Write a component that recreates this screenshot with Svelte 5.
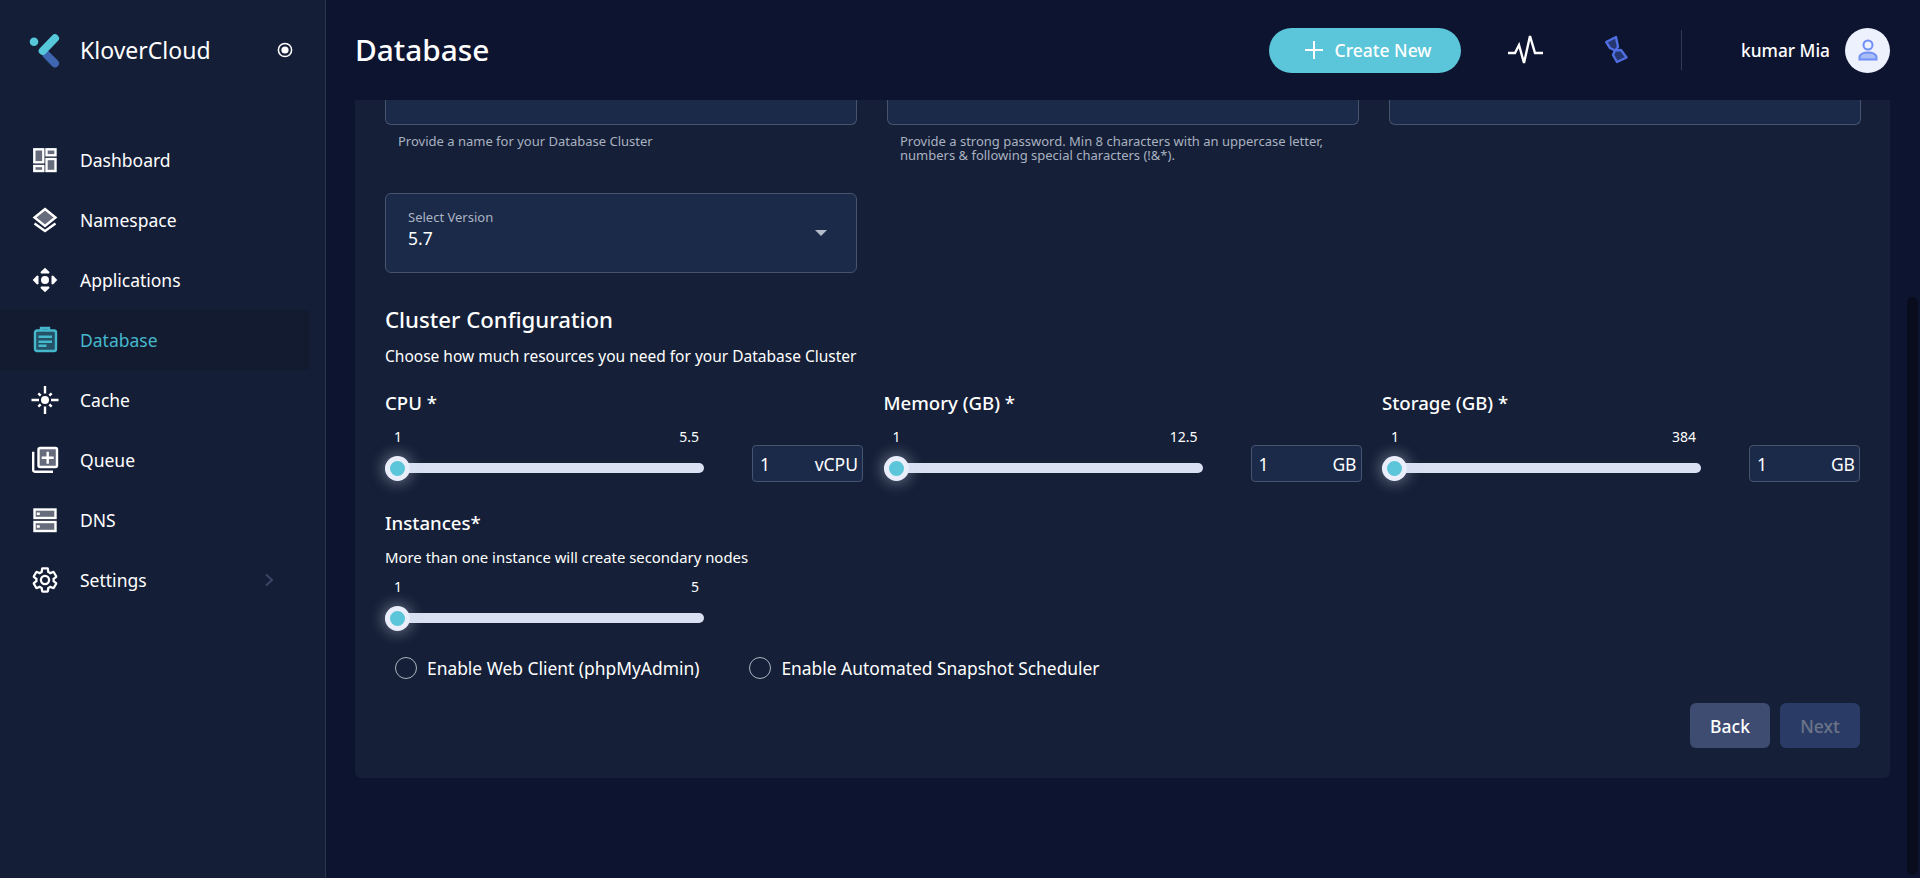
<script>
  const navItems = [
    { label: 'Dashboard', icon: 'dashboard' },
    { label: 'Namespace', icon: 'layers' },
    { label: 'Applications', icon: 'apps' },
    { label: 'Database', icon: 'database', active: true },
    { label: 'Cache', icon: 'cache' },
    { label: 'Queue', icon: 'queue' },
    { label: 'DNS', icon: 'dns' },
    { label: 'Settings', icon: 'settings', arrow: true }
  ];

  const resources = [
    { label: 'CPU *', max: '5.5', unit: 'vCPU' },
    { label: 'Memory (GB) *', max: '12.5', unit: 'GB' },
    { label: 'Storage (GB) *', max: '384', unit: 'GB' }
  ];
</script>

{#snippet navIcon(name)}
  <svg class="nav-icon" viewBox="0 0 28 28" width="28" height="28" fill="none" stroke="currentColor" stroke-width="2.4">
    {#if name === 'dashboard'}
      <g fill="currentColor" fill-opacity="0.35">
        <rect x="3.3" y="3.3" width="9" height="13" /><rect x="15.5" y="3.3" width="9" height="6" />
        <rect x="3.3" y="20" width="9" height="5" /><rect x="15.5" y="13" width="9" height="12" />
      </g>
    {:else if name === 'layers'}
      <path d="M14 3 24.5 11.5 14 20 3.5 11.5Z" fill="currentColor" fill-opacity="0.35" />
      <path d="M3.5 17.5 14 25l10.5-7.5" />
    {:else if name === 'apps'}
      <circle cx="14" cy="14" r="4" fill="currentColor" stroke="none" />
      <g fill="currentColor" stroke="none">
        <path d="M14 1.7 18.5 6 18 7.5H10L9.5 6Z" />
        <path d="M14 26.3 18.5 22 18 20.5H10L9.5 22Z" />
        <path d="M1.7 14 6 9.5 7.5 10V18L6 18.5Z" />
        <path d="M26.3 14 22 9.5 20.5 10V18L22 18.5Z" />
      </g>
    {:else if name === 'database'}
      <rect x="4" y="4.5" width="21" height="20.5" rx="2" fill="currentColor" fill-opacity="0.35" />
      <path d="M10 4.5V2h8v2.5" />
      <path d="M7.5 10.7H21M7.5 15.7H21M7.5 19.7h8" />
    {:else if name === 'cache'}
      <circle cx="14" cy="14" r="4" fill="currentColor" stroke="none" />
      <path d="M14 0v7.5M14 20.5V28M0.5 14H8M20 14h7.5M7.3 7.3l2.4 2.4M18.3 18.3l2.4 2.4M7.3 20.7l2.4-2.4M18.3 9.7l2.4-2.4" />
    {:else if name === 'queue'}
      <path d="M2.2 5.7v18.5a1.5 1.5 0 0 0 1.5 1.5H22" />
      <rect x="7.5" y="2" width="18.5" height="19" rx="1.5" fill="currentColor" fill-opacity="0.35" />
      <path d="M16.7 5.7v12M10.7 11.7h12" />
    {:else if name === 'dns'}
      <g fill="currentColor" fill-opacity="0.35">
        <rect x="3.5" y="3.5" width="21" height="8.5" /><rect x="3.5" y="16" width="21" height="9" />
      </g>
      <path d="M5.8 7.7h3M5.8 20.5h3" />
    {:else if name === 'settings'}
      <g transform="translate(14 14) scale(1.2) translate(-12 -12)" stroke-width="1.9">
        <path d="M19.14 12.94c.04-.3.06-.61.06-.94 0-.32-.02-.64-.07-.94l2.03-1.58c.18-.14.23-.41.12-.61l-1.92-3.32c-.12-.22-.37-.29-.59-.22l-2.39.96c-.5-.38-1.03-.7-1.62-.94l-.36-2.54c-.04-.24-.24-.41-.48-.41h-3.84c-.24 0-.43.17-.47.41l-.36 2.54c-.59.24-1.13.57-1.62.94l-2.39-.96c-.22-.08-.47 0-.59.22L2.74 8.87c-.12.21-.08.47.12.61l2.03 1.58c-.05.3-.09.63-.09.94s.02.64.07.94l-2.03 1.58c-.18.14-.23.41-.12.61l1.92 3.32c.12.22.37.29.59.22l2.39-.96c.5.38 1.03.7 1.62.94l.36 2.54c.05.24.24.41.48.41h3.84c.24 0 .44-.17.47-.41l.36-2.54c.59-.24 1.13-.56 1.62-.94l2.39.96c.22.08.47 0 .59-.22l1.92-3.32c.12-.22.07-.47-.12-.61l-2.01-1.58z" />
        <circle cx="12" cy="12" r="3.4" />
      </g>
    {/if}
  </svg>
{/snippet}

{#snippet slider(max)}
  <div class="slider">
    <div class="range"><span>1</span><span>{max}</span></div>
    <div class="track"><div class="thumb"></div></div>
  </div>
{/snippet}

<div class="layout">
  <aside class="sidebar">
    <div class="brand">
      <svg class="logo" viewBox="0 0 36 36" width="36" height="36">
        <circle cx="5" cy="9.7" r="4.3" fill="#56c8da" />
        <path d="M17.7 23 26 31.3" stroke="#3f67b1" stroke-width="8" stroke-linecap="round" />
        <path d="M13.7 19 26 6.3" stroke="#56c8da" stroke-width="8" stroke-linecap="round" />
      </svg>
      <span class="brand-name">KloverCloud</span>
      <svg class="radio-icon" viewBox="0 0 16 16" width="16" height="16">
        <circle cx="8" cy="8" r="6.6" fill="none" stroke="#fff" stroke-width="1.5" />
        <circle cx="8" cy="8" r="3.6" fill="#fff" />
      </svg>
    </div>
    <nav>
      {#each navItems as item}
        <div class="nav-item" class:active={item.active}>
          {@render navIcon(item.icon)}
          <span>{item.label}</span>
          {#if item.arrow}
            <svg class="chevron" viewBox="0 0 8 14" width="8" height="14" fill="none" stroke="#3c4568" stroke-width="2"><path d="M1 1.5 7 7l-6 5.5" /></svg>
          {/if}
        </div>
      {/each}
    </nav>
  </aside>

  <div class="main">
    <header class="topbar">
      <h1>Database</h1>
      <div class="actions">
        <button class="create">
          <svg viewBox="0 0 18 18" width="18" height="18" stroke="#fff" stroke-width="2"><path d="M9 0v18M0 9h18" /></svg>
          Create New
        </button>
        <svg class="pulse" viewBox="0 0 36 30" width="36" height="30" fill="none" stroke="#fff" stroke-width="2.4"><path d="M0 18h7l4-8 5 18 6-27 5 17h8" /></svg>
        <svg class="glass" viewBox="0 0 25 30" width="25" height="30" fill="#26366f" stroke="#4f6ee0" stroke-width="2.4" stroke-linejoin="round">
          <path d="M2.2 7 12 2l2 10-3 3.500-5-2.500Z" />
          <path d="M11 15.500 17 15l5.500 7.500L13 27l-4-7Z" />
        </svg>
        <div class="divider"></div>
        <span class="user">kumar Mia</span>
        <div class="avatar">
          <svg viewBox="0 0 24 24" width="24" height="24" stroke="#6f8ff5" stroke-width="2">
            <circle cx="12" cy="7" r="4.5" fill="#edf0fd" />
            <path d="M3.5 21.5v-2C3.5 16 8 14.5 12 14.5s8.5 1.5 8.5 5v2Z" fill="#a9bdf7" />
          </svg>
        </div>
      </div>
    </header>

    <div class="scroll">
      <section class="card">
        <div class="row-three">
          <div>
            <div class="input-stub"></div>
            <p class="hint">Provide a name for your Database Cluster</p>
          </div>
          <div>
            <div class="input-stub"></div>
            <p class="hint">Provide a strong password. Min 8 characters with an uppercase letter, numbers &amp; following special characters (!&amp;*).</p>
          </div>
          <div>
            <div class="input-stub"></div>
          </div>
        </div>

        <div class="select">
          <div class="select-text">
            <div class="select-label">Select Version</div>
            <div class="select-value">5.7</div>
          </div>
          <div class="caret"></div>
        </div>

        <h2>Cluster Configuration</h2>
        <p class="sub">Choose how much resources you need for your Database Cluster</p>

        <div class="resources">
          {#each resources as res}
            <div class="resource">
              <div class="res-label">{res.label}</div>
              <div class="res-body">
                {@render slider(res.max)}
                <div class="amount"><span>1</span><span class="unit">{res.unit}</span></div>
              </div>
            </div>
          {/each}
        </div>

        <div class="res-label instances">Instances*</div>
        <p class="sub instances-sub">More than one instance will create secondary nodes</p>
        {@render slider('5')}

        <div class="options">
          <label class="option"><span class="radio"></span>Enable Web Client (phpMyAdmin)</label>
          <label class="option"><span class="radio"></span>Enable Automated Snapshot Scheduler</label>
        </div>

        <div class="footer">
          <button class="btn back">Back</button>
          <button class="btn next">Next</button>
        </div>
      </section>
    </div>
  </div>

  <div class="scrollbar"><div class="scrollbar-thumb"></div></div>
</div>

<style>
  :global(body) {
    margin: 0;
    background: #0d1430;
    font-family: "Noto Sans", "Open Sans", sans-serif;
    color: #fff;
    overflow: hidden;
  }

  .layout {
    display: flex;
    height: 878px;
    overflow: hidden;
  }

  .sidebar {
    width: 325px;
    flex: none;
    background: #141e36;
    border-right: 1px solid #2a3550;
  }

  .brand {
    display: flex;
    align-items: center;
    height: 100px;
    padding-left: 29px;
    box-sizing: border-box;
  }

  .brand-name {
    margin-left: 15px;
    font-size: 23px;
    width: 197px;
  }

  nav {
    margin-top: 30px;
  }

  .nav-item {
    display: flex;
    align-items: center;
    height: 60px;
    width: 310px;
    padding-left: 31px;
    box-sizing: border-box;
    font-size: 17.5px;
  }

  .nav-item span {
    margin-left: 21px;
  }

  .nav-item.active {
    background: #131b31;
    color: #45b8cc;
  }

  .chevron {
    margin-left: auto;
    margin-right: 37px;
  }

  .main {
    flex: 1;
    min-width: 0;
    display: flex;
    flex-direction: column;
  }

  .topbar {
    height: 100px;
    flex: none;
    display: flex;
    align-items: center;
    justify-content: space-between;
    padding: 0 30px 0 29px;
    background: #0d1430;
  }

  h1 {
    margin: 0 0 2px;
    font-size: 29.8px;
    font-weight: 500;
  }

  .actions {
    display: flex;
    align-items: center;
  }

  .create {
    display: flex;
    align-items: center;
    justify-content: center;
    gap: 12px;
    width: 192px;
    height: 45px;
    padding: 0 0 0 6px;
    border: none;
    border-radius: 23px;
    background: #5bc6d9;
    color: #fff;
    font: 500 17.5px "Noto Sans", sans-serif;
  }

  .pulse {
    margin-left: 47px;
  }

  .glass {
    margin-left: 60px;
  }

  .divider {
    width: 1px;
    height: 40px;
    background: #2f3a55;
    margin-left: 52px;
  }

  .user {
    margin-left: 59px;
    font-size: 17.3px;
    font-weight: 500;
  }

  .avatar {
    width: 45px;
    height: 45px;
    margin-left: 15px;
    border-radius: 50%;
    background: #edf0fd;
    display: flex;
    align-items: center;
    justify-content: center;
  }

  .scroll {
    flex: 1;
    overflow: hidden;
    padding: 0 30px 0 29px;
  }

  .card {
    background: #151f37;
    height: 678px;
    box-sizing: border-box;
    padding: 0 30px;
    border-radius: 0 0 6px 6px;
  }

  .row-three {
    display: grid;
    grid-template-columns: repeat(3, 472px);
    gap: 30px;
    height: 93px;
  }

  .input-stub {
    height: 25px;
    background: #1b2a49;
    border: 1px solid #47546f;
    border-top: none;
    border-radius: 0 0 6px 6px;
    box-sizing: border-box;
  }

  .hint {
    margin: 9px 13px 0;
    font-size: 13px;
    line-height: 14px;
    color: #a9b2c0;
  }

  .select {
    display: flex;
    align-items: center;
    justify-content: space-between;
    width: 472px;
    height: 80px;
    box-sizing: border-box;
    padding: 0 29px 0 22px;
    background: #1b2a49;
    border: 1px solid #47546f;
    border-radius: 6px;
  }

  .select-text {
    margin-bottom: 6px;
  }

  .select-label {
    font-size: 13px;
    line-height: 15px;
    margin-bottom: 1px;
    color: #aab3c2;
  }

  .select-value {
    font-size: 17.5px;
    line-height: 24px;
  }

  .caret {
    width: 0;
    height: 0;
    border-left: 6px solid transparent;
    border-right: 6px solid transparent;
    border-top: 6px solid #b5bccb;
  }

  h2 {
    margin: 32px 0 0;
    font-size: 22.2px;
    line-height: 30px;
    font-weight: 500;
  }

  .sub {
    margin: 11px 0 0;
    font-size: 15.5px;
    line-height: 20px;
  }

  .resources {
    display: grid;
    grid-template-columns: repeat(3, 478px);
    gap: 20.5px;
    margin-top: 25px;
  }

  .res-label {
    font-size: 18.6px;
    line-height: 24px;
    font-weight: 500;
  }

  .res-body {
    display: flex;
    justify-content: space-between;
    margin-top: 13px;
  }

  .slider {
    width: 319px;
  }

  .range {
    display: flex;
    justify-content: space-between;
    padding: 0 5px 0 9px;
    font-size: 14px;
    line-height: 18px;
  }

  .track {
    position: relative;
    height: 10px;
    margin-top: 17px;
    background: #d8e0f2;
    border-radius: 5px;
  }

  .thumb {
    position: absolute;
    left: 0;
    top: -7.5px;
    width: 25px;
    height: 25px;
    box-sizing: border-box;
    border: 5px solid #e9eefa;
    border-radius: 50%;
    background: #5bc6d9;
    box-shadow: 0 0 14px 3px rgba(216, 224, 242, 0.35);
  }

  .amount {
    display: flex;
    justify-content: space-between;
    align-items: center;
    width: 111px;
    height: 37px;
    margin-top: 17px;
    box-sizing: border-box;
    padding: 0 4px 0 7px;
    background: #1b2a49;
    border: 1px solid #47546f;
    border-radius: 4px;
    font-size: 17.5px;
  }

  .instances {
    margin-top: 29px;
  }

  .instances-sub {
    margin: 12px 0 11px;
    font-size: 14.9px;
  }

  .options {
    display: flex;
    gap: 50px;
    margin: 33px 0 0 10px;
  }

  .option {
    display: flex;
    align-items: center;
    gap: 10px;
    font-size: 17.4px;
    line-height: 24px;
  }

  .radio {
    width: 22px;
    height: 22px;
    box-sizing: border-box;
    border: 1px solid #aeb4c0;
    border-radius: 50%;
  }

  .footer {
    display: flex;
    justify-content: flex-end;
    gap: 10px;
    margin-top: 23px;
  }

  .btn {
    width: 80px;
    height: 45px;
    border: none;
    border-radius: 6px;
    font: 500 17.5px "Noto Sans", sans-serif;
  }

  .back {
    background: #3e4c72;
    color: #fff;
  }

  .next {
    background: #2a3c65;
    color: #6c7489;
  }

  .scrollbar {
    position: absolute;
    top: 0;
    right: 0;
    width: 13px;
    height: 878px;
  }

  .scrollbar-thumb {
    position: absolute;
    top: 297px;
    right: 2px;
    width: 11px;
    height: 578px;
    background: #080c1c;
    border-radius: 6px;
  }
</style>
